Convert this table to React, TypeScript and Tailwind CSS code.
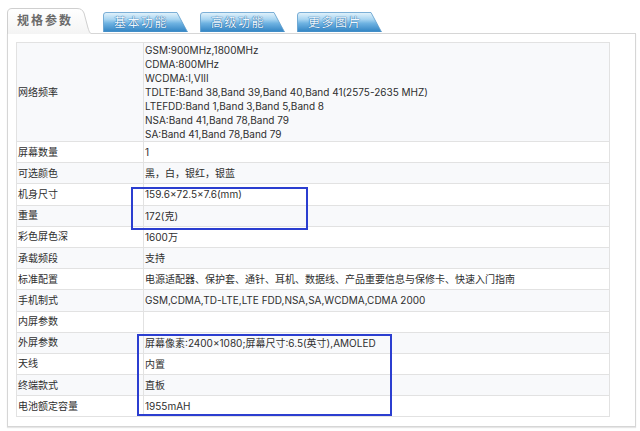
import React from "react";

type Row = { label: string; value: string[] };

const rows: Row[] = [
  {
    label: "网络频率",
    value: [
      "GSM:900MHz,1800MHz",
      "CDMA:800MHz",
      "WCDMA:I,VIII",
      "TDLTE:Band 38,Band 39,Band 40,Band 41(2575-2635 MHZ)",
      "LTEFDD:Band 1,Band 3,Band 5,Band 8",
      "NSA:Band 41,Band 78,Band 79",
      "SA:Band 41,Band 78,Band 79",
    ],
  },
  { label: "屏幕数量", value: ["1"] },
  { label: "可选颜色", value: ["黑，白，银红，银蓝"] },
  { label: "机身尺寸", value: ["159.6×72.5×7.6(mm)"] },
  { label: "重量", value: ["172(克)"] },
  { label: "彩色屏色深", value: ["1600万"] },
  { label: "承载频段", value: ["支持"] },
  { label: "标准配置", value: ["电源适配器、保护套、通针、耳机、数据线、产品重要信息与保修卡、快速入门指南"] },
  { label: "手机制式", value: ["GSM,CDMA,TD-LTE,LTE FDD,NSA,SA,WCDMA,CDMA 2000"] },
  { label: "内屏参数", value: [""] },
  { label: "外屏参数", value: ["屏幕像素:2400×1080;屏幕尺寸:6.5(英寸),AMOLED"] },
  { label: "天线", value: ["内置"] },
  { label: "终端款式", value: ["直板"] },
  { label: "电池额定容量", value: ["1955mAH"] },
];

const ActiveTab = ({ title }: { title: string }) => (
  <div className="relative z-10 -mb-px w-[84px] h-[26px]">
    <svg className="absolute inset-0" width="84" height="26" viewBox="0 0 84 26">
      <defs>
        <linearGradient id="act" x1="0" y1="0" x2="0" y2="1">
          <stop offset="0" stopColor="#ffffff" />
          <stop offset="1" stopColor="#f4f4f4" />
        </linearGradient>
      </defs>
      <path d="M0.5,26 V5 Q0.5,0.5 5,0.5 H70 C74,0.5 75.5,2 77,5 L81,20 C82.5,24.5 83,25 84,25 V26 Z" fill="url(#act)" />
      <path d="M0.5,26 V5 Q0.5,0.5 5,0.5 H70 C74,0.5 75.5,2 77,5 L81,20 C82.5,24.5 83,25 84,25.5" fill="none" stroke="#cfcfcf" />
    </svg>
    <span className="relative flex h-full items-center pl-[10px] pb-[2px] text-[12px] font-bold tracking-[2px] text-[#6b6b6b]">
      {title}
    </span>
  </div>
);

const BlueTab = ({ title }: { title: string }) => (
  <div className="relative w-[85px] h-[20px] mb-[1px]">
    <svg className="absolute inset-0" width="85" height="20" viewBox="0 0 85 20">
      <defs>
        <linearGradient id="blu" x1="0" y1="0" x2="0" y2="1">
          <stop offset="0" stopColor="#e4f3fc" />
          <stop offset="0.35" stopColor="#a8d5f1" />
          <stop offset="0.55" stopColor="#6fb3e2" />
          <stop offset="1" stopColor="#2f82c2" />
        </linearGradient>
      </defs>
      <path d="M0.5,20 V3 Q0.5,0.5 3,0.5 H74 L84.5,20 Z" fill="url(#blu)" stroke="#5d9ccc" strokeWidth="0.8" />
    </svg>
    <span className="relative flex h-full items-center pl-[11px] text-[12px] tracking-[1.5px] text-[#eef8ff] [text-shadow:0_0_1px_#1d5f9c,0_0_1px_#1d5f9c]">
      {title}
    </span>
  </div>
);

export default function App() {
  return (
    <div className="relative w-[640px] h-[431px] overflow-hidden bg-white font-['Inter','Noto_Sans_CJK_SC',sans-serif] text-[#2e2e2e]">
      {/* tabs */}
      <div className="flex h-[33px] items-end pl-[7px] font-['Noto_Sans_CJK_SC',sans-serif]">
        <ActiveTab title="规格参数" />
        <div className="ml-[12px]"><BlueTab title="基本功能" /></div>
        <div className="ml-[12px]"><BlueTab title="高级功能" /></div>
        <div className="ml-[12px]"><BlueTab title="更多图片" /></div>
      </div>

      {/* panel */}
      <div className="ml-[7px] w-[629px] h-[394px] border border-[#d6d6d6] p-[8px] shadow-[0_1px_1px_#e6e6e6]">
        <div className="w-[594px] border border-[#e2e2e2] text-[10px]">
          {rows.map((row, i) => (
            <div
              key={row.label}
              className={`flex ${i > 0 ? "border-t border-[#e2e2e2] h-[21.2px]" : "h-[98px]"} ${i % 2 === 0 ? "bg-[#f8f9fb]" : "bg-white"}`}
            >
              <div className="flex w-[127px] items-center border-r border-[#e2e2e2] pl-[1px]">{row.label}</div>
              <div className="flex flex-1 flex-col justify-center pl-[1px]">
                {row.value.map((line, j) => (
                  <div key={j} className="leading-[14px]">{line}</div>
                ))}
              </div>
            </div>
          ))}
        </div>
      </div>

      {/* highlight boxes */}
      <div className="absolute left-[131px] top-[187px] w-[177px] h-[43px] border-2 border-[#2b3ed0]" />
      <div className="absolute left-[137px] top-[334px] w-[255px] h-[82px] border-2 border-[#2b3ed0]" />
    </div>
  );
}
